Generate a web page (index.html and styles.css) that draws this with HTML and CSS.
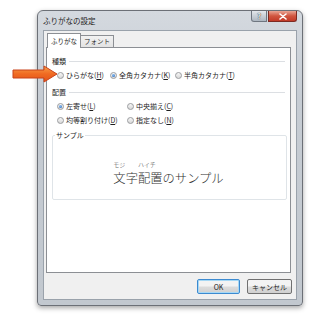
FILE: index.html
```html
<!DOCTYPE html>
<html lang="ja">
  <head>
    <meta charset="UTF-8" />
    <title>ふりがなの設定</title>
    <link rel="stylesheet" href="styles.css">
  </head>
  <body>
    <!-- annotation arrow -->
    <svg class="pointer" width="46" height="18" viewBox="0 0 46 18">
      <defs>
        <linearGradient id="arrowFill" x1="0" y1="0" x2="0" y2="1">
          <stop offset="0" stop-color="#f7a04a" />
          <stop offset="0.5" stop-color="#f06a22" />
          <stop offset="1" stop-color="#e2541a" />
        </linearGradient>
      </defs>
      <path d="M1 5 H32 V1 L45 9 L32 17 V13 H1 Z" fill="url(#arrowFill)" stroke="#c9421a" stroke-width="1" />
    </svg>

    <div class="dialog">
      <div class="titlebar">
        <span class="title">ふりがなの設定</span>
        <div class="caption-buttons">
          <span class="cap-btn help">?</span>
          <span class="cap-btn close">
            <svg width="8" height="7" viewBox="0 0 8 7"><path d="M1 1 L7 6 M7 1 L1 6" stroke="#fff" stroke-width="1.6" stroke-linecap="round" /></svg>
          </span>
        </div>
      </div>

      <div class="client">
        <div class="tabs">
          <span class="tab active">ふりがな</span>
          <span class="tab">フォント</span>
        </div>

        <div class="panel">
          <div class="group-head"><span>種類</span></div>
          <div class="radio-row kind">
            <label class="radio"><span class="dot"></span>ひらがな(<u>H</u>)</label>
            <label class="radio"><span class="dot on"></span>全角カタカナ(<u>K</u>)</label>
            <label class="radio"><span class="dot"></span>半角カタカナ(<u>T</u>)</label>
          </div>

          <div class="group-head"><span>配置</span></div>
          <div class="radio-grid">
            <label class="radio"><span class="dot on"></span>左寄せ(<u>L</u>)</label>
            <label class="radio"><span class="dot"></span>中央揃え(<u>C</u>)</label>
            <label class="radio"><span class="dot"></span>均等割り付け(<u>D</u>)</label>
            <label class="radio"><span class="dot"></span>指定なし(<u>N</u>)</label>
          </div>

          <fieldset class="sample">
            <legend>サンプル</legend>
            <div class="sample-text">
              <span class="rb"><span class="rt">モジ</span>文字</span><span class="rb"><span class="rt">ハイチ</span>配置</span>のサンプル
            </div>
          </fieldset>
        </div>

        <div class="actions">
          <button class="btn default">OK</button>
          <button class="btn">キャンセル</button>
        </div>
      </div>
    </div>
  </body>
</html>
```

FILE: styles.css
```css
/* page */
body { margin: 0; width: 312px; height: 318px; overflow: hidden; background: #fff; font-family: "Noto Sans CJK JP", "Noto Sans", sans-serif; color: #1e1e1e; position: relative; }
.pointer { position: absolute; left: 12px; top: 65px; }

/* window frame */
.dialog { margin: 10px 0 0 37px; width: 266px; height: 296px; box-sizing: border-box; border: 1px solid #6c7077; border-radius: 6px 6px 4px 4px; background: linear-gradient(#d4d9df, #c6ccd3 30%, #c2c8cf); padding: 0 5px 5px 5px; display: flex; flex-direction: column; box-shadow: 0 2px 5px rgba(0, 0, 0, 0.35); }
.titlebar { height: 19px; display: flex; justify-content: space-between; align-items: flex-start; }
.title { font-size: 7.5px; line-height: 19px; color: #222; }
.caption-buttons { display: flex; gap: 1px; }
.cap-btn { height: 11px; display: flex; align-items: center; justify-content: center; border: 1px solid #6f7680; border-top: none; box-sizing: border-box; }
.help { width: 16px; border-radius: 0 0 0 3px; background: linear-gradient(#e3e7ec, #aeb7c1); font-size: 7px; font-weight: bold; color: #fff; text-shadow: 0 0 1px #333, 0 0 1px #333; }
.close { width: 29px; border-radius: 0 0 3px 0; background: linear-gradient(#e9a594, #d0553f 50%, #c23a28); border-color: #7d2a22; }

/* client area */
.client { flex: 1; background: #f0f0f0; border: 1px solid #9aa2ab; padding: 2px 5px 0 2px; display: flex; flex-direction: column; }
.tabs { height: 14px; display: flex; align-items: flex-end; padding-left: 1px; }
.tab { height: 12px; box-sizing: border-box; padding: 0 3px; border: 1px solid #8c8f94; border-bottom: none; background: linear-gradient(#f2f2f2, #e3e3e3); font-size: 6.5px; line-height: 11px; margin-left: -1px; }
.tab.active { height: 15px; width: 34px; background: #fff; position: relative; z-index: 1; margin-bottom: -1px; margin-left: 0; line-height: 14px; }

.panel { height: 226px; box-sizing: border-box; border: 1px solid #8c8f94; background: #fff; padding: 0 5px; font-size: 7px; }

/* group headers with rule */
.group-head { display: flex; align-items: center; height: 10px; margin-top: 8px; gap: 3px; }
.group-head::after { content: ""; flex: 1; border-top: 1px solid #dcdfe3; }
.group-head + .radio-row, .group-head + .radio-grid { margin-top: 4px; }
.radio-grid + .sample { margin-top: 6px; }
.radio-row + .group-head { margin-top: 7px; }

.radio-row { display: flex; padding-left: 5px; height: 10px; }
.radio-row.kind .radio:nth-child(1) { width: 53px; }
.radio-row.kind .radio:nth-child(2) { width: 65px; }
.radio-grid { display: grid; grid-template-columns: 70px auto; row-gap: 4px; padding-left: 5px; }
.radio { display: flex; align-items: center; height: 10px; white-space: nowrap; }
.radio u { text-decoration-thickness: 0.5px; text-underline-offset: 1px; }
.dot { width: 7px; height: 7px; box-sizing: border-box; border-radius: 50%; border: 1px solid #9a9c9f; background: linear-gradient(#f6f6f6, #d8d8d8); margin-right: 2px; position: relative; }
.dot.on::after { content: ""; position: absolute; left: 1px; top: 1px; width: 3px; height: 3px; border-radius: 50%; background: radial-gradient(circle at 40% 35%, #8fc3f5, #1d5fb8); }

/* sample box */
.sample { margin: 6px 0 0 0; width: 235px; height: 69px; box-sizing: border-box; border: 1px solid #dfe4e8; border-radius: 2px; padding: 0; }
.sample legend { font-size: 7px; line-height: 9px; margin-left: 2px; padding: 0 1px; }
.sample-text { display: flex; justify-content: center; align-items: flex-end; padding-top: 21px; padding-right: 2px; font-size: 12.3px; line-height: 14px; color: #333; font-weight: 300; }
.rb { display: inline-flex; flex-direction: column; align-items: flex-start; }
.rt { font-size: 6px; line-height: 7px; margin-bottom: 3px; }

/* buttons */
.actions { display: flex; justify-content: flex-end; gap: 7px; padding-top: 6px; margin-right: -1px; }
.btn { height: 15px; padding: 0; box-sizing: border-box; border: 1px solid #707070; border-radius: 2px; background: linear-gradient(#f3f3f3 45%, #dcdcdc 55%, #d0d0d0); font-family: inherit; font-size: 7px; color: #1e1e1e; width: 45px; }
.btn.default { width: 43px; border-color: #3c8ad0; box-shadow: inset 0 0 0 1px #a6d8f5; }
```
